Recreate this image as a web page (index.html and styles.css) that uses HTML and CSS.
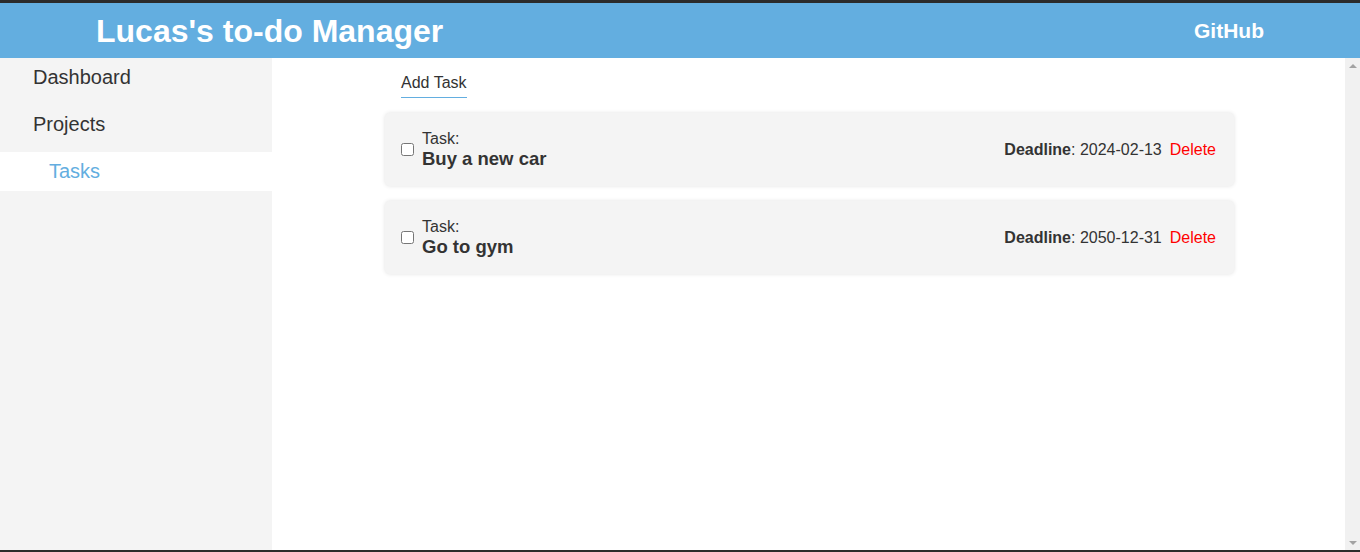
FILE: index.html
```html
<!DOCTYPE html>
<html>
<head>
<meta charset="utf-8">
<title>Lucas's to-do Manager</title>
<link rel="stylesheet" href="styles.css">
</head>
<body>
<div class="frame">
  <header class="topbar">
    <h1 class="brand">Lucas's to-do Manager</h1>
    <a class="github" href="#">GitHub</a>
  </header>
  <div class="main">
    <nav class="sidebar">
      <a class="nav-item" href="#">Dashboard</a>
      <a class="nav-item" href="#">Projects</a>
      <a class="nav-sub active" href="#">Tasks</a>
    </nav>
    <section class="content">
      <div class="container">
        <div class="toolbar"><a class="add-task" href="#">Add Task</a></div>
        <div class="card">
          <div class="card-left">
            <input type="checkbox" class="check">
            <div class="task-text">
              <div class="task-label">Task:</div>
              <div class="task-name">Buy a new car</div>
            </div>
          </div>
          <div class="card-right">
            <span class="deadline"><b>Deadline</b>: 2024-02-13</span>
            <a class="delete" href="#">Delete</a>
          </div>
        </div>
        <div class="card">
          <div class="card-left">
            <input type="checkbox" class="check">
            <div class="task-text">
              <div class="task-label">Task:</div>
              <div class="task-name">Go to gym</div>
            </div>
          </div>
          <div class="card-right">
            <span class="deadline"><b>Deadline</b>: 2050-12-31</span>
            <a class="delete" href="#">Delete</a>
          </div>
        </div>
      </div>
    </section>
    <div class="scrollbar">
      <span class="arrow up"></span>
      <span class="arrow down"></span>
    </div>
  </div>
</div>
</body>
</html>
```
FILE: styles.css
```css
* { box-sizing: border-box; }
html, body { margin: 0; padding: 0; height: 100%; }
body {
  font-family: "Liberation Sans", Arial, sans-serif;
  color: #333;
  background: #fff;
  overflow: hidden;
}
a { text-decoration: none; }
.frame {
  height: 552px;
  display: flex;
  flex-direction: column;
  border-top: 3px solid #2b2b2b;
  border-bottom: 2px solid #2b2b2b;
}
.topbar {
  height: 55px;
  flex: none;
  background: #63aee0;
  display: flex;
  align-items: center;
  justify-content: space-between;
  padding: 0 96px;
}
.brand {
  margin: 0;
  color: #fff;
  font-size: 32px;
  font-weight: bold;
  line-height: 36px;
}
.github {
  color: #fff;
  font-weight: bold;
  font-size: 21px;
}
.main {
  flex: 1;
  display: flex;
  min-height: 0;
}
.sidebar {
  width: 272px;
  flex: none;
  background: #f4f4f4;
  display: flex;
  flex-direction: column;
}
.nav-item {
  display: block;
  font-size: 20px;
  line-height: 23px;
  padding: 8px 33px 16px;
  color: #333;
}
.nav-sub {
  display: block;
  font-size: 20px;
  line-height: 23px;
  padding: 8px 49px;
  color: #333;
}
.nav-sub.active {
  background: #fff;
  color: #63aee0;
}
.content {
  flex: 1;
  overflow: hidden;
  padding-left: 2px;
}
.scrollbar {
  width: 15px;
  flex: none;
  background: #f1f1f1;
  display: flex;
  flex-direction: column;
  justify-content: space-between;
  align-items: center;
  padding: 6px 0 5px;
}
.arrow {
  width: 0;
  height: 0;
  border-left: 4px solid transparent;
  border-right: 4px solid transparent;
}
.arrow.up { border-bottom: 4px solid #a3a3a3; }
.arrow.down { border-top: 4px solid #a3a3a3; }
.container {
  width: 849px;
  margin: 0 auto;
  padding-top: 16px;
}
.toolbar {
  padding-left: 16px;
  margin-bottom: 15px;
}
.add-task {
  display: inline-block;
  color: #333;
  font-size: 16px;
  line-height: 18px;
  padding-bottom: 5px;
  border-bottom: 1px solid #63aee0;
}
.card {
  background: #f4f4f4;
  border-radius: 5px;
  box-shadow: 0 0 4px rgba(0,0,0,0.12);
  display: flex;
  align-items: center;
  justify-content: space-between;
  padding: 16px 18px 16px 16px;
  margin-bottom: 15px;
  height: 73px;
}
.card-left {
  display: flex;
  align-items: center;
}
.check {
  margin: 0 8px 0 0;
  width: 13px;
  height: 13px;
}
.task-label {
  font-size: 16px;
  line-height: 18px;
}
.task-name {
  font-size: 18.5px;
  line-height: 22px;
  font-weight: bold;
}
.card-right {
  font-size: 16px;
  display: flex;
  align-items: center;
  gap: 8px;
}
.delete {
  color: #ff0000;
}
```
